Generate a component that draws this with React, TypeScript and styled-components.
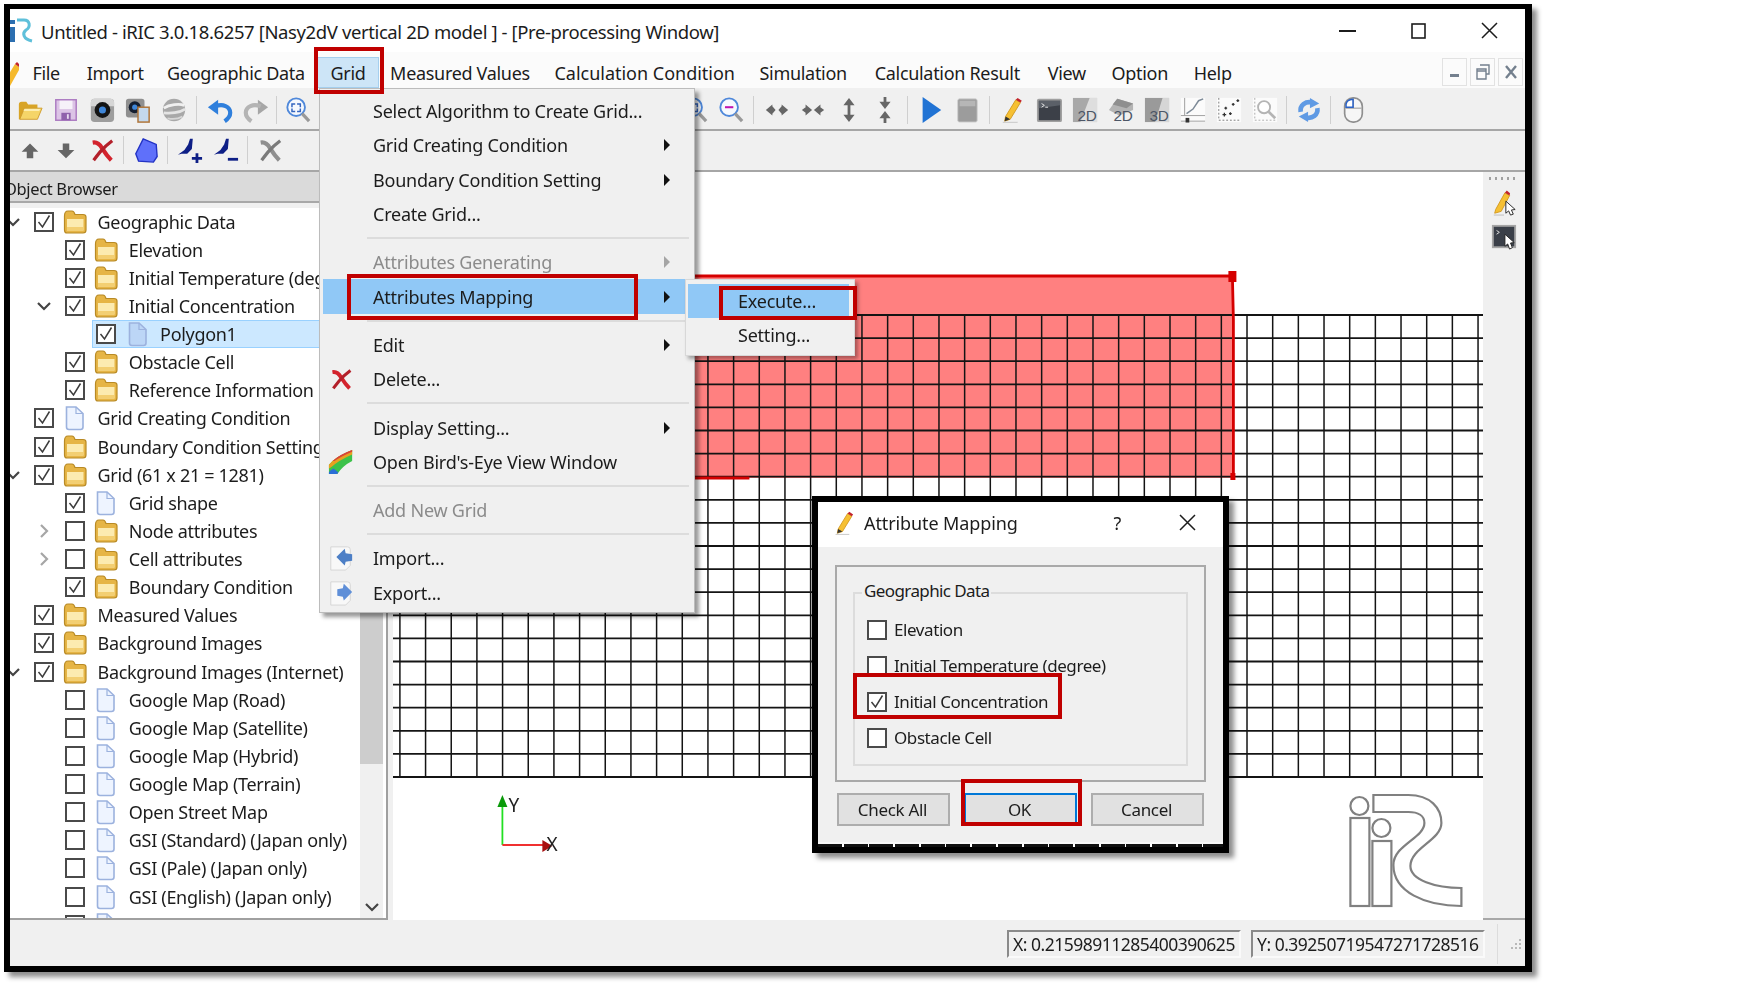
import { ReactNode } from 'react'
import styled, { createGlobalStyle } from 'styled-components'

const UI_FONT = `"Noto Sans", "Open Sans", sans-serif`

const GlobalStyle = createGlobalStyle`
  html, body { margin: 0; padding: 0; background: #fff; }
  body { font-family: ${UI_FONT}; font-size: 18px; color: #1c1c1c; }
  * { box-sizing: border-box; }
`

const Page = styled.div`
  position: relative;
  width: 1752px;
  height: 1002px;
  padding: 4px 0 0 4px;
  overflow: hidden;
  letter-spacing: -0.31px;
  filter: blur(0.35px);
`

const AppWindow = styled.div`
  display: flex;
  flex-direction: column;
  width: 1528px;
  height: 968px;
  background: #f0f0f0;
  border: solid #000;
  border-width: 5px 7px 6px 6px;
  box-shadow: 5px 5px 5px rgba(0, 0, 0, 0.45);
`

const TitleBar = styled.div`
  display: flex;
  align-items: center;
  height: 43px;
  flex: none;
  background: #fff;
`

const TitleText = styled.span`
  margin-left: 8px;
  padding-top: 2px;
  white-space: nowrap;
  font-size: 18.5px;
  letter-spacing: -0.39px;
`

const WindowButtons = styled.div`
  display: flex;
  margin-left: auto;
`

const WindowButton = styled.div`
  display: flex;
  width: 71px;
  height: 32px;
  align-items: center;
  justify-content: center;
`

const MenuBar = styled.div`
  display: flex;
  align-items: flex-end;
  height: 36px;
  flex: none;
  background: #fbfbfb;
`

const MenuEntry = styled.div<{ $active?: boolean; $nudge: number; $track?: number }>`
  display: flex;
  align-items: center;
  height: 31px;
  margin-left: ${p => p.$nudge}px;
  padding: 0 13.4px;
  white-space: nowrap;
  ${p => p.$track !== undefined && `letter-spacing: ${p.$track}px;`}
  ${p => p.$active && 'background: #cde5f7; border: 1px solid #a5cfee; padding: 0 12.4px;'}
`

const MdiButtons = styled.div`
  display: flex;
  gap: 3px;
  margin: 0 2px 2px auto;
`

const MdiButton = styled.div`
  display: flex;
  width: 25px;
  height: 28px;
  align-items: center;
  justify-content: center;
  border: 1px solid #e2e2e2;
`

const ToolBar = styled.div<{ $h: number; $top: number; $bottom: number }>`
  display: flex;
  align-items: center;
  height: ${p => p.$h}px;
  flex: none;
  padding: ${p => p.$top}px 0 ${p => p.$bottom}px 2px;
  border-bottom: 2px solid #a6a6a6;
  background: #f0f0f0;
`

const ToolSlot = styled.div`
  display: flex;
  width: 36px;
  flex: none;
  align-items: center;
  justify-content: center;
`

const ToolSep = styled.div<{ $w?: number }>`
  width: ${p => p.$w ?? 10}px;
  height: 28px;
  flex: none;
  position: relative;
  &::after {
    content: '';
    position: absolute;
    left: 40%;
    top: 0;
    bottom: 0;
    width: 1px;
    background: #cfcfcf;
  }
`

const ToolSpacer = styled.div<{ $w: number }>`
  width: ${p => p.$w}px;
  flex: none;
`

const Workspace = styled.div`
  display: flex;
  flex: 1;
  min-height: 0;
`

const Dock = styled.div`
  display: flex;
  flex-direction: column;
  width: 378px;
  flex: none;
  overflow: hidden;
`

const DockHeader = styled.div`
  display: flex;
  align-items: center;
  height: 35.5px;
  flex: none;
  padding-top: 3px;
  background: #dadada;
  border-bottom: 5px solid #f0f0f0;
  box-shadow: inset 0 -2px 0 #a8a8a8;
  font-size: 16.5px;
  letter-spacing: -0.35px;
  white-space: nowrap;
  overflow: hidden;
  span { margin-left: -6px; }
`

const TreePane = styled.div`
  display: flex;
  flex: 1;
  min-height: 0;
  border-right: 2px solid #a0a0a0;
  border-bottom: 2px solid #a0a0a0;
  background: #fff;
`

const Tree = styled.div`
  flex: 1;
  min-width: 0;
  overflow: hidden;
`

const Row = styled.div`
  display: flex;
  align-items: center;
  height: 28.13px;
  white-space: nowrap;
  overflow: hidden;
`

const ArrowSlot = styled.div<{ $level: number }>`
  display: flex;
  width: 20px;
  flex: none;
  align-items: center;
  justify-content: center;
  margin-left: ${p => 31.3 * p.$level - 7.5}px;
  margin-right: 7px;
`

const RowBody = styled.div<{ $selected?: boolean }>`
  display: flex;
  flex: 1;
  align-items: center;
  height: 100%;
  padding-left: 4px;
  ${p => p.$selected && 'background: #cce8ff; box-shadow: inset 0 0 0 1px #99d1ff;'}
`

const Box = styled.span`
  display: flex;
  width: 20px;
  height: 20px;
  flex: none;
  align-items: center;
  justify-content: center;
  background: #fff;
  border: 2px solid #4a4a4a;
`

const TreeIcon = styled.span`
  display: flex;
  width: 24px;
  flex: none;
  margin: 0 10.5px 0 9.5px;
`

const Scrollbar = styled.div`
  position: relative;
  width: 23px;
  margin-right: 3px;
  flex: none;
  background: #f0f0f0;
`

const ScrollThumb = styled.div`
  height: 556px;
  background: #cdcdcd;
`

const ScrollDown = styled.div`
  position: absolute;
  left: 4px;
  bottom: 3px;
  display: flex;
`

const Splitter = styled.div`
  width: 4.6px;
  flex: none;
`

const Canvas = styled.div`
  flex: 1;
  min-width: 0;
  background: #fff;
  svg { display: block; }
`

const SideBar = styled.div`
  display: flex;
  width: 42px;
  flex: none;
  flex-direction: column;
  align-items: center;
  gap: 8px;
  padding-top: 5px;
  border-bottom: 2px solid #a8a8a8;
  background: #f0f0f0;
`

const GripDots = styled.div`
  width: 30px;
  height: 3px;
  margin-bottom: 2px;
  background: repeating-linear-gradient(90deg, #a0a0a0 0 2px, transparent 2px 6px);
`

const StatusBar = styled.div`
  display: flex;
  align-items: center;
  height: 46px;
  flex: none;
  padding: 2px 3px 0 0;
  justify-content: flex-end;
`

const StatusField = styled.div`
  display: flex;
  align-items: center;
  width: 234px;
  height: 28px;
  margin-right: 10px;
  padding-left: 4px;
  background: #f0f0f0;
  border: 2px solid;
  border-color: #8a8a8a #fafafa #fafafa #8a8a8a;
  font-size: 17.5px;
  letter-spacing: -0.5px;
  white-space: nowrap;
`

const StatusSep = styled.div`
  width: 1px;
  height: 40px;
  margin: 0 10px 0 2px;
  background: #dcdcdc;
`

const PopupMenu = styled.div`
  position: absolute;
  left: 318.6px;
  top: 88px;
  width: 376px;
  height: 525px;
  padding: 5px 3px 0;
  background: #f0f0f0;
  border: 1px solid #bcbcbc;
  box-shadow: 4px 4px 4px rgba(0, 0, 0, 0.4);
  letter-spacing: -0.22px;
`

const PopupItem = styled.div<{ $hot?: boolean; $off?: boolean }>`
  display: flex;
  align-items: center;
  height: 34.3px;
  white-space: nowrap;
  ${p => p.$hot && 'background: #90c8f6;'}
  ${p => p.$off && 'color: #8b8b8b;'}
`

const PopupIcon = styled.span`
  display: flex;
  width: 50.4px;
  flex: none;
  justify-content: center;
  padding-right: 13px;
`

const SubArrow = styled.span<{ $off?: boolean }>`
  width: 0;
  height: 0;
  margin-left: auto;
  margin-right: 21px;
  border-style: solid;
  border-width: 6px 0 6px 6px;
  border-color: transparent transparent transparent ${p => (p.$off ? '#a5a5a5' : '#111')};
`

const PopupSep = styled.div`
  height: 14px;
  margin: 0 2px 0 44px;
  display: flex;
  align-items: center;
  &::after {
    content: '';
    flex: 1;
    height: 2px;
    background: #dcdcdc;
  }
`

const SubMenu = styled.div`
  position: absolute;
  left: 685px;
  top: 279px;
  width: 170px;
  height: 77px;
  padding: 4px 5px 0 2px;
  background: #f0f0f0;
  border: 1px solid #d8d8d8;
  box-shadow: 3px 3px 4px rgba(0, 0, 0, 0.35);
  letter-spacing: -0.22px;
`

const SubItem = styled.div<{ $hot?: boolean }>`
  display: flex;
  align-items: center;
  height: 34px;
  padding-left: 50px;
  ${p => p.$hot && 'background: #90c8f6;'}
`

const Dialog = styled.div`
  position: absolute;
  left: 812px;
  top: 496px;
  display: flex;
  flex-direction: column;
  width: 417px;
  height: 357px;
  border: 6px solid #000;
  background: #f0f0f0;
  box-shadow: 5px 5px 5px rgba(0, 0, 0, 0.45);
`

const DialogTitle = styled.div`
  display: flex;
  align-items: center;
  height: 45px;
  flex: none;
  padding: 0 0 4px 15px;
  background: #fff;
`

const DialogName = styled.span`
  margin-left: 7px;
  letter-spacing: -0.1px;
`

const DialogHelp = styled.span`
  margin-left: auto;
  margin-right: 58px;
`

const DialogClose = styled.span`
  display: flex;
  margin-right: 27px;
`

const DialogBody = styled.div`
  flex: 1;
  padding: 18px 17px 0;
`

const Frame = styled.div`
  height: 217px;
  padding: 25px 16px 0;
  border: 2px solid #a9a9a9;
  background: #f0f0f0;
`

const Group = styled.div`
  position: relative;
  height: 174px;
  padding: 17.5px 0 0 11.5px;
  border: 2px solid #dcdcdc;
`

const GroupLabel = styled.span`
  position: absolute;
  left: 7px;
  top: -15px;
  padding: 0 2px;
  background: #f0f0f0;
  font-size: 17px;
  letter-spacing: -0.6px;
`

const OptionRow = styled.div`
  display: flex;
  align-items: center;
  gap: 7.5px;
  height: 36px;
  font-size: 17px;
  letter-spacing: -0.42px;
`

const ButtonRow = styled.div`
  display: flex;
  gap: 14px;
  margin: 11px 2px 0;
`

const DialogButton = styled.div<{ $primary?: boolean }>`
  display: flex;
  width: 113px;
  height: 33px;
  padding-right: 2px;
  align-items: center;
  justify-content: center;
  background: #e1e1e1;
  border: 2px solid ${p => (p.$primary ? '#0078d7' : '#adadad')};
  font-size: 17px;
`

const GridSliver = styled.div`
  height: 5px;
  flex: none;
  background:
    linear-gradient(#f8f8f8 0 2px, transparent 2px),
    repeating-linear-gradient(90deg, #111 0 24px, #fff 24px 25.7px);
`

const Callout = styled.div<{ $x: number; $y: number; $w: number; $h: number }>`
  position: absolute;
  left: ${p => p.$x}px;
  top: ${p => p.$y}px;
  width: ${p => p.$w}px;
  height: ${p => p.$h}px;
  border: 4.5px solid #c00000;
`

const TreeFolder = () => (
  <svg width="24" height="26" viewBox="0 0 24 26">
    <path d="M1.5 7Q1.5 2 5 2H9Q11 2 12 5.5H20Q23 5.5 23 8V21Q23 24 20 24H4Q1.5 24 1.5 21Z" fill="#e6b546" stroke="#b88a25" strokeWidth="1.2" />
    <path d="M4 10H20.5V21.5H4Z" fill="#fcebb0" />
    <path d="M4 18H20.5V21.5H4Z" fill="#f3cf72" />
  </svg>
)

const TreeFile = ({ tint }: { tint: string }) => (
  <svg width="24" height="26" viewBox="0 0 24 26">
    <path d="M3.5 2H13L20 8.5V22Q20 24.5 17.5 24.5H6Q3.5 24.5 3.5 22Z" fill={tint} stroke="#9cb2de" strokeWidth="1.6" />
    <path d="M13 2V8.5H20" fill="none" stroke="#9cb2de" strokeWidth="1.2" />
  </svg>
)

const Tick = () => (
  <svg width="16" height="16" viewBox="0 0 16 16">
    <path d="M2.5 8L6.5 13L13.5 1.5" fill="none" stroke="#3c3c3c" strokeWidth="1.5" />
  </svg>
)

const Chevron = ({ open }: { open: boolean }) => (
  <svg width="16" height="16" viewBox="0 0 16 16">
    <path
      d={open ? 'M2 5L8 11L14 5' : 'M5 2L11 8L5 14'}
      fill="none"
      stroke={open ? '#444' : '#a6a6a6'}
      strokeWidth="2.2"
    />
  </svg>
)

const xStrokes = (color: string, dark: string) => (
  <>
    <path d="M4 6Q10 5 14 12Q19 20 24 25" fill="none" stroke={color} strokeWidth="4.5" />
    <path d="M25 4Q17 10 12 16Q8 21 5 25" fill="none" stroke={dark} strokeWidth="3.5" />
  </>
)

const icons: Record<string, ReactNode> = {
  open: (
    <>
      <path d="M2 8Q2 5 5 5H10L12 8H22V12H8L4 24H2Z" fill="#d8a426" />
      <path d="M8 12H27L22 24H3Z" fill="#f5d568" stroke="#cf9d2c" />
      <path d="M8 13H25L24 15H7Z" fill="#fdeeb0" />
    </>
  ),
  save: (
    <>
      <path d="M3 3H25V25H3Z" fill="#dcc4e6" stroke="#ad7dc2" strokeWidth="1.6" />
      <path d="M7 4H21V13H7Z" fill="#f6f1f9" />
      <path d="M9 17H19V25H9Z" fill="#9062ac" />
      <path d="M15 18.5H17V23.5H15Z" fill="#e9dcf0" />
    </>
  ),
  camera: (
    <>
      <rect x="2" y="2" width="25" height="25" rx="4" fill="#9d9d9d" />
      <path d="M2 6Q2 2 6 2H23Q27 2 27 6V10H2Z" fill="#d6d6d6" />
      <circle cx="14.5" cy="14" r="8.5" fill="#141414" />
      <circle cx="14.5" cy="14" r="3.8" fill="#3f86d8" />
    </>
  ),
  snapshot: (
    <>
      <rect x="1" y="2" width="20" height="20" rx="3" fill="#8f8f8f" />
      <circle cx="10.5" cy="11" r="6.5" fill="#141e30" />
      <circle cx="10.5" cy="11" r="2.8" fill="#3f86d8" />
      <rect x="14" y="11" width="12" height="16" fill="#c4d8ec" stroke="#b0763a" strokeWidth="1.6" />
    </>
  ),
  globe: (
    <>
      <circle cx="14" cy="14" r="12" fill="#a8a8a8" />
      <path d="M3 12C9 8 20 7 25 9" fill="none" stroke="#f0f0f0" strokeWidth="3" />
      <path d="M3 17C10 18 20 17 26 13" fill="none" stroke="#e4e4e4" strokeWidth="3" />
      <path d="M7 23C12 24 18 24 23 21" fill="none" stroke="#d6d6d6" strokeWidth="2" />
    </>
  ),
  undo: (
    <>
      <path d="M1 11L12 3V19Z" fill="#2f7fdc" />
      <path d="M9 10C17 7 25 10 25 17C25 21 22 24 19 26" fill="none" stroke="#2f7fdc" strokeWidth="4.5" />
    </>
  ),
  redo: (
    <>
      <path d="M27 11L16 3V19Z" fill="#a6a6a6" />
      <path d="M19 10C11 7 3 10 3 17C3 21 6 24 9 26" fill="none" stroke="#b4b4b4" strokeWidth="4.5" />
    </>
  ),
  zoomFit: (
    <>
      <circle cx="12" cy="11" r="9.5" fill="#f6f9fe" stroke="#4f88da" strokeWidth="2" />
      <path d="M7.5 11V7.5H11M13 7.5H16.5V11M16.5 12.5V15.5H13M11 15.5H7.5V12.5" fill="none" stroke="#3566c0" strokeWidth="1.6" />
      <path d="M18.5 18L26 26" stroke="#999" strokeWidth="3.5" />
    </>
  ),
  zoomOut: (
    <>
      <circle cx="12" cy="11" r="9.5" fill="#f6f9fe" stroke="#4f88da" strokeWidth="2" />
      <path d="M7.5 11H16.5" stroke="#c014b0" strokeWidth="2.2" />
      <path d="M18.5 18L26 26" stroke="#999" strokeWidth="3.5" />
    </>
  ),
  hOut: <path d="M2 14L9 8V20ZM12.5 14L9 10V18ZM26 14L19 8V20ZM15.5 14L19 10V18Z" fill="#666" />,
  hIn: <path d="M13 14L6 8V20ZM15 14L22 8V20ZM2 14L6 11V17ZM26 14L22 11V17Z" fill="#666" />,
  vOut: <path d="M14 1L8 9H20ZM14 27L8 19H20ZM12.5 9H15.5V19H12.5Z" fill="#666" />,
  vIn: <path d="M14 13L8 5H20ZM14 15L8 23H20ZM12.5 0H15.5V5H12.5ZM12.5 23H15.5V28H12.5Z" fill="#666" />,
  play: <path d="M5 0L25 14L5 28Z" fill="#2173d4" />,
  stop: (
    <>
      <rect x="4" y="2" width="21" height="25" rx="2" fill="#9c9c9c" stroke="#cfcfcf" />
      <path d="M6 4H23V10H6Z" fill="#b6b6b6" />
    </>
  ),
  pencil: (
    <>
      <path d="M6 21L17 3L22 6L11 24L5 26Z" fill="#f6c033" stroke="#d2981f" />
      <path d="M17 3L19 1L23.5 4L22 6Z" fill="#c2242d" />
      <path d="M5 26L6 21L11 24Z" fill="#333" />
      <path d="M3 27.5H19" stroke="#cfcfcf" strokeWidth="1.6" />
    </>
  ),
  terminal: (
    <>
      <rect x="2" y="3" width="25" height="23" rx="1" fill="#3c4048" stroke="#a0a0a0" strokeWidth="2" />
      <path d="M3 4H26V9L3 12Z" fill="#5b6068" />
      <path d="M6 7L9 9L6 11M10 11H13" fill="none" stroke="#ececec" />
    </>
  ),
  tile2d: (
    <>
      <path d="M1 1H27V27H1Z" fill="#a8a8a8" />
      <path d="M27 1V27H9L19 1Z" fill="#dedede" />
      <text x="6" y="26" fontSize="16.5" fill="#4c5666" fontFamily="Liberation Sans, sans-serif">2D</text>
    </>
  ),
  tile2dB: (
    <>
      <path d="M10 2L27 7V14L12 20L1 14Z" fill="#b4b4b4" />
      <path d="M10 2L27 7L20 12L5 8Z" fill="#8f8f8f" />
      <text x="6" y="26" fontSize="16.5" fill="#4c5666" fontFamily="Liberation Sans, sans-serif">2D</text>
    </>
  ),
  tile3d: (
    <>
      <path d="M1 1H27V27H1Z" fill="#9a9a9a" />
      <path d="M27 1V27H12L20 1Z" fill="#d6d6d6" />
      <text x="6" y="26" fontSize="16.5" fill="#4c5666" fontFamily="Liberation Sans, sans-serif">3D</text>
    </>
  ),
  chartLine: (
    <>
      <rect x="1" y="1" width="26" height="26" fill="#fbfbfb" />
      <path d="M5 1V20M1 20H27M1 26H27" fill="none" stroke="#9a9a9a" />
      <path d="M7 18L14 13L20 4L25 2" fill="none" stroke="#7d8a97" strokeWidth="1.6" />
      <rect x="6" y="22.5" width="4" height="5" fill="#333" />
    </>
  ),
  chartDots: (
    <>
      <rect x="1" y="1" width="26" height="26" fill="#fbfbfb" />
      <path d="M3 1V25H27" fill="none" stroke="#777" strokeDasharray="2 2" />
      <path d="M7 19h4M9 17v4M14 18h3M15.5 16.5v3M9 12h3M10.5 10.5v3M17 8h3M18.5 6.5v3M22 4h3M23.5 2.5v3" stroke="#333" strokeWidth="1.4" />
    </>
  ),
  chartZoom: (
    <>
      <rect x="1" y="1" width="26" height="26" fill="#fbfbfb" />
      <path d="M3 1V25H27" fill="none" stroke="#aaa" strokeDasharray="2 2" />
      <circle cx="13" cy="11" r="6.5" fill="#fff" stroke="#b4b4b4" strokeWidth="2" />
      <path d="M18 16L25 23" stroke="#b4b4b4" strokeWidth="3" />
    </>
  ),
  refresh: (
    <>
      <path d="M5 16C4 9 10 4 18 6" fill="none" stroke="#5f9ae4" strokeWidth="5" />
      <path d="M15 1L25 7L15 12Z" fill="#5f9ae4" />
      <path d="M23 12C24 19 18 24 10 22" fill="none" stroke="#5f9ae4" strokeWidth="5" />
      <path d="M13 27L3 21L13 16Z" fill="#5f9ae4" />
    </>
  ),
  mouse: (
    <>
      <rect x="5" y="1" width="19" height="26" rx="9" fill="#f6f6f6" stroke="#8f8f8f" strokeWidth="1.8" />
      <path d="M6 12H23M14.5 2V12" stroke="#8f8f8f" />
      <path d="M6.5 11V8Q7 3 14 2.5V11Z" fill="#fff" stroke="#2a62c8" strokeWidth="1.6" />
    </>
  ),
  up: <path d="M14 7L5 16H10.5V23H17.5V16H23Z" fill="#666" />,
  down: <path d="M14 23L5 14H10.5V7H17.5V14H23Z" fill="#666" />,
  redX: xStrokes('#d3232d', '#b3202a'),
  grayX: xStrokes('#8f8f8f', '#7a7a7a'),
  polygon: <path d="M11 2L25 8L26 21L22 27L6 26L3 18Z" fill="#5f70fa" stroke="#2232c4" strokeWidth="1.5" />,
  addPoint: (
    <>
      <path d="M1 19L8 14L12 8L14 2H17L16 13L11 18L5 18Z" fill="#0e1f86" />
      <path d="M16 23H27M21.5 17.5V28" stroke="#0e1f86" strokeWidth="3" />
    </>
  ),
  removePoint: (
    <>
      <path d="M1 19L8 14L12 8L14 2H17L16 13L11 18L5 18Z" fill="#0e1f86" />
      <path d="M16 24H27" stroke="#0e1f86" strokeWidth="3" />
    </>
  ),
  bird: (
    <>
      <path d="M1 17Q8 8 26 1V13Q16 18 10 27H1Z" fill="#3cc24a" />
      <path d="M1 17Q8 8 26 1V6Q12 12 3 20L1 21Z" fill="#e8a020" />
      <path d="M5 13Q12 6 26 1V3Q14 8 7 13Z" fill="#d9403a" />
      <path d="M1 25Q3 22 6 21L11 25L10 27H1Z" fill="#2b6fd6" />
    </>
  ),
  importDoc: (
    <>
      <path d="M3 2H21Q24 2 24 5V22L19 27H3Z" fill="#f8f8f8" stroke="#d4d4d4" />
      <path d="M9 13L18 4L19 9L26 10V17L19 18L18 22Z" fill="#4d7fc6" />
    </>
  ),
  exportDoc: (
    <>
      <path d="M3 2H21Q24 2 24 5V22L19 27H3Z" fill="#f8f8f8" stroke="#d4d4d4" />
      <path d="M26 13L17 4L16 9L10 10V17L16 18L17 22Z" fill="#5f8fd8" />
    </>
  ),
  pencilCursor: (
    <>
      <path d="M5 21L15 3L20 6L11 23L4 25Z" fill="#f6c033" stroke="#d2981f" />
      <path d="M15 3L17 0.500L20.500 3.500L20 6Z" fill="#c2242d" />
      <path d="M3 27H14" stroke="#cfcfcf" strokeWidth="1.6" />
      <path d="M16 12L26 21L22 21.5L24 26L21 27L19 22.5L16 25Z" fill="#fff" stroke="#222" />
    </>
  ),
  terminalCursor: (
    <>
      <rect x="2" y="2" width="24" height="23" fill="#3a3f48" stroke="#a5a5a5" strokeWidth="2" />
      <path d="M6 7L9 9L6 11" fill="none" stroke="#e8e8e8" />
      <path d="M15 11L25 20L21 20.5L23 25.5L20 27L18 21.5L15 24Z" fill="#fff" stroke="#222" />
    </>
  ),
}

const Ico = ({ name, size = 28 }: { name: string; size?: number }) => (
  <svg width={size} height={size} viewBox="0 0 28 28">
    {icons[name]}
  </svg>
)

const tools1: (string | number | [string, number])[] = [
  'open', 'save', 'camera', 'snapshot', 'globe', 10, 'undo', 'redo', 6, 'zoomFit',
  ['gap', 361], 'zoomFit', 'zoomOut', 10, 'hOut', 'hIn', 'vOut', 'vIn', 10, 'play', 'stop', 10,
  'pencil', 'terminal', 'tile2d', 'tile2dB', 'tile3d', 'chartLine', 'chartDots', 'chartZoom', 8, 'refresh', 8, 'mouse',
]

const tools2: (string | number)[] = ['up', 'down', 'redX', 8, 'polygon', 8, 'addPoint', 'removePoint', 8, 'grayX']

const renderTools = (list: (string | number | [string, number])[]) =>
  list.map((t, i) => {
    if (typeof t === 'number') return <ToolSep key={i} $w={t} />
    if (Array.isArray(t)) return <ToolSpacer key={i} $w={t[1]} />
    return (
      <ToolSlot key={i}>
        <Ico name={t} size={26} />
      </ToolSlot>
    )
  })

type TreeRow = {
  label: string
  level: number
  checked: boolean
  icon: 'folder' | 'file' | 'fileBlue'
  arrow?: 'open' | 'closed'
  selected?: boolean
}

const r = (label: string, level: number, checked: boolean, icon: TreeRow['icon'] = 'folder', arrow?: TreeRow['arrow'], selected?: boolean): TreeRow => ({
  label, level, checked, icon, arrow, selected,
})

const treeRows: TreeRow[] = [
  r('Geographic Data', 0, true, 'folder', 'open'),
  r('Elevation', 1, true),
  r('Initial Temperature (degree)', 1, true),
  r('Initial Concentration', 1, true, 'folder', 'open'),
  r('Polygon1', 2, true, 'fileBlue', undefined, true),
  r('Obstacle Cell', 1, true),
  r('Reference Information', 1, true),
  r('Grid Creating Condition', 0, true, 'file'),
  r('Boundary Condition Setting', 0, true),
  r('Grid (61 x 21 = 1281)', 0, true, 'folder', 'open'),
  r('Grid shape', 1, true, 'file'),
  r('Node attributes', 1, false, 'folder', 'closed'),
  r('Cell attributes', 1, false, 'folder', 'closed'),
  r('Boundary Condition', 1, true),
  r('Measured Values', 0, true),
  r('Background Images', 0, true),
  r('Background Images (Internet)', 0, true, 'folder', 'open'),
  r('Google Map (Road)', 1, false, 'file'),
  r('Google Map (Satellite)', 1, false, 'file'),
  r('Google Map (Hybrid)', 1, false, 'file'),
  r('Google Map (Terrain)', 1, false, 'file'),
  r('Open Street Map', 1, false, 'file'),
  r('GSI (Standard) (Japan only)', 1, false, 'file'),
  r('GSI (Pale) (Japan only)', 1, false, 'file'),
  r('GSI (English) (Japan only)', 1, false, 'file'),
  r('GSI (Relief) (Japan only)', 1, false, 'file'),
]

const menuEntries: { name: string; nudge: number; track?: number }[] = [
  { name: 'File', nudge: 0 },
  { name: 'Import', nudge: 0 },
  { name: 'Geographic Data', nudge: -3.4 },
  { name: 'Grid', nudge: -1.1 },
  { name: 'Measured Values', nudge: -2.2 },
  { name: 'Calculation Condition', nudge: -2.2, track: -0.01 },
  { name: 'Simulation', nudge: -2.2 },
  { name: 'Calculation Result', nudge: 1.1 },
  { name: 'View', nudge: 1.1 },
  { name: 'Option', nudge: -1.1 },
  { name: 'Help', nudge: -1.1 },
]

const gridX = Array.from({ length: 43 }, (_, i) => 399.5 + 25.67 * i)
const gridY = Array.from({ length: 21 }, (_, i) => 315 + 23.1 * i)

const CanvasDrawing = () => (
  <svg width="1091" height="748" viewBox="392.6 172 1091 748">
    <path d="M600 276H1232L1233 320V478H600Z" fill="#ff8080" />
    {gridY.map(y => (
      <path key={y} d={`M392 ${y}H1484`} stroke="#141414" strokeWidth="1.8" />
    ))}
    {gridX.map(x => (
      <path key={x} d={`M${x} 315V777`} stroke="#141414" strokeWidth="1.5" />
    ))}
    <path d="M600 276H1232L1233 320V478M693 478H749" fill="none" stroke="#d50000" strokeWidth="2.8" />
    <rect x="1228" y="271" width="8" height="11" fill="#d50000" />
    <rect x="1230" y="473" width="5" height="7" fill="#d50000" />
    <path d="M502 845V800" stroke="#22e022" strokeWidth="1.8" />
    <path d="M502 795L497 807H507Z" fill="#0a9a0a" />
    <path d="M502 845H545" stroke="#f03030" strokeWidth="2" />
    <path d="M552 846L542 840V852Z" fill="#a80f0f" />
    <text x="508" y="812" fontSize="19" fill="#222" fontFamily="Noto Sans, sans-serif">Y</text>
    <text x="546" y="851" fontSize="19" fill="#222" fontFamily="Noto Sans, sans-serif">X</text>
    <g fill="none" stroke="#808080" strokeWidth="2.2">
      <ellipse cx="1359" cy="806" rx="9" ry="9" />
      <rect x="1350" y="818" width="19" height="88" />
      <ellipse cx="1381" cy="828" rx="9" ry="9" />
      <rect x="1372" y="841" width="19" height="65" />
      <path d="M1373 795H1408C1430 795 1441 808 1441 823C1441 840 1410 848 1410 866C1410 880 1435 888 1461 888V906C1425 906 1393 892 1393 865C1393 845 1424 838 1424 823C1424 816 1418 812 1408 812H1373Z" />
    </g>
  </svg>
)

const SmallLogo = () => (
  <svg width="23" height="26" viewBox="0 0 23 26">
    <path d="M0 9H5V24H0ZM0 2H5V6H0Z" fill="#2c6fb0" />
    <path d="M7 2H14C20 2 21 9 16 12C12 15 13 21 22 23" fill="none" stroke="#5fc0da" strokeWidth="3" />
  </svg>
)

const MenuPencil = () => (
  <svg width="9" height="26" viewBox="0 0 9 26">
    <path d="M-6 20L5 2L9 5V8L0 24L-6 24Z" fill="#f5b92c" />
    <path d="M5 2L7 0L9 2V5Z" fill="#c2242d" />
  </svg>
)

const CloseGlyph = ({ size = 17 }: { size?: number }) => (
  <svg width={size} height={size} viewBox="0 0 17 17">
    <path d="M1 1L16 16M16 1L1 16" stroke="#1c1c1c" strokeWidth="1.5" />
  </svg>
)

const SizeGrip = () => (
  <svg width="14" height="13" viewBox="0 0 14 13">
    <path d="M11 1h2v2h-2zM7 5h2v2H7zM11 5h2v2h-2zM3 9h2v2H3zM7 9h2v2H7zM11 9h2v2h-2z" fill="#b8b8b8" />
  </svg>
)

const popupRows: (null | { label: string; icon?: string; sub?: boolean; off?: boolean; hot?: boolean })[] = [
  { label: 'Select Algorithm to Create Grid...' },
  { label: 'Grid Creating Condition', sub: true },
  { label: 'Boundary Condition Setting', sub: true },
  { label: 'Create Grid...' },
  null,
  { label: 'Attributes Generating', sub: true, off: true },
  { label: 'Attributes Mapping', sub: true, hot: true },
  null,
  { label: 'Edit', sub: true },
  { label: 'Delete...', icon: 'redX' },
  null,
  { label: 'Display Setting...', sub: true },
  { label: "Open Bird's-Eye View Window", icon: 'bird' },
  null,
  { label: 'Add New Grid', off: true },
  null,
  { label: 'Import...', icon: 'importDoc' },
  { label: 'Export...', icon: 'exportDoc' },
]

const dialogOptions = [
  { label: 'Elevation', checked: false },
  { label: 'Initial Temperature (degree)', checked: false },
  { label: 'Initial Concentration', checked: true },
  { label: 'Obstacle Cell', checked: false },
]

function App () {
  return (
    <Page>
      <GlobalStyle />
      <AppWindow>
        <TitleBar>
          <SmallLogo />
          <TitleText>Untitled - iRIC 3.0.18.6257 [Nasy2dV vertical 2D model ] - [Pre-processing Window]</TitleText>
          <WindowButtons>
            <WindowButton>
              <svg width="17" height="2"><rect width="17" height="2" fill="#1c1c1c" /></svg>
            </WindowButton>
            <WindowButton>
              <svg width="15" height="16"><rect x="1" y="1" width="13" height="14" fill="none" stroke="#1c1c1c" strokeWidth="1.6" /></svg>
            </WindowButton>
            <WindowButton>
              <CloseGlyph />
            </WindowButton>
          </WindowButtons>
        </TitleBar>

        <MenuBar>
          <MenuPencil />
          {menuEntries.map(entry => (
            <MenuEntry key={entry.name} $active={entry.name === 'Grid'} $nudge={entry.nudge} $track={entry.track}>
              {entry.name}
            </MenuEntry>
          ))}
          <MdiButtons>
            <MdiButton>
              <svg width="10" height="12"><rect y="8" width="9" height="3" fill="#74808e" /></svg>
            </MdiButton>
            <MdiButton>
              <svg width="14" height="16" viewBox="0 0 14 16">
                <path d="M4 1H13V10H10M1 5H10V15H1ZM1 7H10" fill="none" stroke="#74808e" strokeWidth="1.4" />
              </svg>
            </MdiButton>
            <MdiButton>
              <svg width="12" height="14" viewBox="0 0 12 14">
                <path d="M1 1L11 13M11 1L1 13" stroke="#74808e" strokeWidth="2.4" />
              </svg>
            </MdiButton>
          </MdiButtons>
        </MenuBar>

        <ToolBar $h={43} $top={2} $bottom={0}>{renderTools(tools1)}</ToolBar>
        <ToolBar $h={41} $top={0} $bottom={2}>{renderTools(tools2)}</ToolBar>

        <Workspace>
          <Dock>
            <DockHeader><span>Object Browser</span></DockHeader>
            <TreePane>
              <Tree>
                {treeRows.map(row => (
                  <Row key={row.label}>
                    <ArrowSlot $level={row.level}>
                      {row.arrow && <Chevron open={row.arrow === 'open'} />}
                    </ArrowSlot>
                    <RowBody $selected={row.selected}>
                      <Box>{row.checked && <Tick />}</Box>
                      <TreeIcon>
                        {row.icon === 'folder'
                          ? <TreeFolder />
                          : <TreeFile tint={row.icon === 'fileBlue' ? '#bcd6f6' : '#eef4ff'} />}
                      </TreeIcon>
                      {row.label}
                    </RowBody>
                  </Row>
                ))}
              </Tree>
              <Scrollbar>
                <ScrollThumb />
                <ScrollDown><Chevron open /></ScrollDown>
              </Scrollbar>
            </TreePane>
          </Dock>
          <Splitter />
          <Canvas><CanvasDrawing /></Canvas>
          <SideBar>
            <GripDots />
            <Ico name="pencilCursor" size={26} />
            <Ico name="terminalCursor" size={26} />
          </SideBar>
        </Workspace>

        <StatusBar>
          <StatusField>X: 0.21598911285400390625</StatusField>
          <StatusField>Y: 0.39250719547271728516</StatusField>
          <StatusSep />
          <SizeGrip />
        </StatusBar>
      </AppWindow>

      <PopupMenu>
        {popupRows.map((item, i) =>
          item === null ? (
            <PopupSep key={i} />
          ) : (
            <PopupItem key={item.label} $hot={item.hot} $off={item.off}>
              <PopupIcon>{item.icon && <Ico name={item.icon} size={item.icon === 'redX' ? 24 : 26} />}</PopupIcon>
              {item.label}
              {item.sub && <SubArrow $off={item.off} />}
            </PopupItem>
          )
        )}
      </PopupMenu>

      <SubMenu>
        <SubItem $hot>Execute...</SubItem>
        <SubItem>Setting...</SubItem>
      </SubMenu>

      <Dialog>
        <DialogTitle>
          <Ico name="pencil" size={24} />
          <DialogName>Attribute Mapping</DialogName>
          <DialogHelp>?</DialogHelp>
          <DialogClose><CloseGlyph /></DialogClose>
        </DialogTitle>
        <DialogBody>
          <Frame>
            <Group>
              <GroupLabel>Geographic Data</GroupLabel>
              {dialogOptions.map(opt => (
                <OptionRow key={opt.label}>
                  <Box>{opt.checked && <Tick />}</Box>
                  {opt.label}
                </OptionRow>
              ))}
            </Group>
          </Frame>
          <ButtonRow>
            <DialogButton>Check All</DialogButton>
            <DialogButton $primary>OK</DialogButton>
            <DialogButton>Cancel</DialogButton>
          </ButtonRow>
        </DialogBody>
        <GridSliver />
      </Dialog>

      <Callout $x={313.6} $y={47} $w={70} $h={47} />
      <Callout $x={346.6} $y={274} $w={291} $h={46} />
      <Callout $x={719} $y={286} $w={138} $h={34} />
      <Callout $x={853} $y={673} $w={209} $h={46} />
      <Callout $x={961.4} $y={779} $w={120.6} $h={47} />
    </Page>
  )
}

export default App
